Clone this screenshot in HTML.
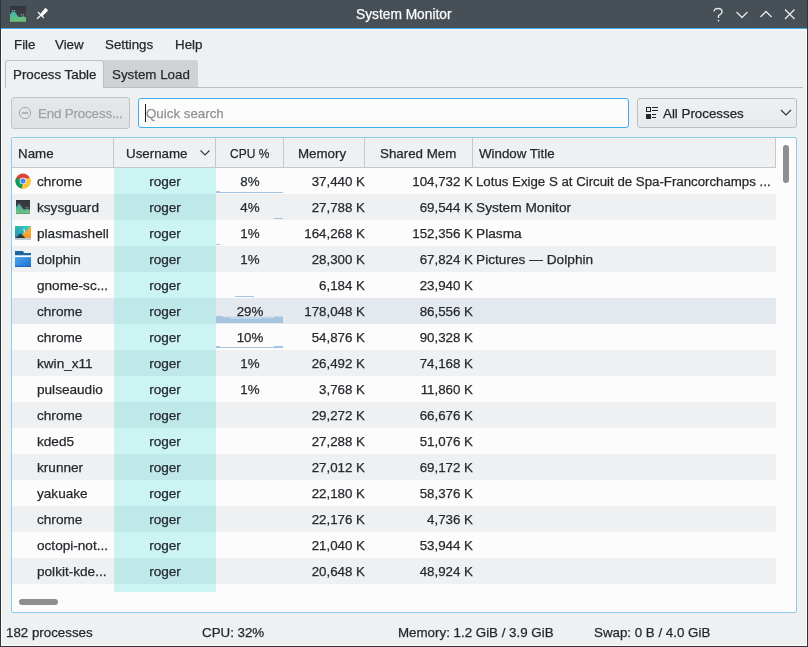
<!DOCTYPE html><html><head><meta charset="utf-8"><style>
*{margin:0;padding:0;box-sizing:border-box}
html,body{width:808px;height:647px;overflow:hidden}
body{-webkit-font-smoothing:antialiased;background:#eff0f1;font-family:"Liberation Sans",sans-serif;font-size:13.33px;color:#25292d;position:relative}
.a{position:absolute;white-space:nowrap}
.ic{position:absolute}
.t{position:absolute;white-space:nowrap;line-height:26px;height:26px;padding-top:1px}
.r{text-align:right}
.c{text-align:center}
#root{-webkit-text-stroke:0.25px currentColor;position:absolute;left:0;top:0;width:808px;height:647px;will-change:transform}
</style></head><body><div id="root">
<div class="a" style="left:0;top:0;width:808px;height:28px;background:#475057"></div>
<div class="a" style="left:0;top:28px;width:808px;height:1px;background:#3daee9"></div>
<div class="a" style="left:0;top:0;width:1px;height:647px;background:#2f343a"></div>
<div class="a" style="left:807px;top:0;width:1px;height:647px;background:#2f343a"></div>
<div class="a" style="left:0;top:646px;width:808px;height:1px;background:#2f343a"></div>
<div class="a" style="left:1px;top:29px;width:1px;height:617px;background:#fcfcfc"></div>
<div class="a" style="left:806px;top:29px;width:1px;height:617px;background:#fcfcfc"></div>
<div class="a" style="left:1px;top:645px;width:806px;height:1px;background:#fcfcfc"></div>
<div class="a" style="left:1px;top:29px;width:806px;height:1px;background:#fcf8f8"></div>
<!-- titlebar icons -->
<svg class="ic" style="left:10px;top:6px" width="16" height="16" viewBox="0 0 16 16">
<defs><linearGradient id="gk" x1="0" y1="0" x2="0" y2="1"><stop offset="0" stop-color="#3fb3ad"/><stop offset="1" stop-color="#74c174"/></linearGradient>
<linearGradient id="gb" x1="0" y1="0" x2="0" y2="1"><stop offset="0" stop-color="#31363b"/><stop offset="1" stop-color="#454a50"/></linearGradient></defs>
<rect width="16" height="16" fill="url(#gb)"/>
<path d="M0 16 V8.5 Q1 6.5 2.5 5.6 Q4 5 5.5 6.2 Q7.5 10.5 9 11 Q10.5 11.2 12 10.4 Q14 10.2 16 11.5 V16 Z" fill="url(#gk)"/>
<g fill="#cfd8d6" opacity="0.8"><circle cx="2.6" cy="4.5" r="0.6"/><circle cx="4.6" cy="4.5" r="0.6"/><circle cx="11.5" cy="8.8" r="0.6"/><circle cx="13.5" cy="8.8" r="0.6"/></g>
<rect y="15.3" width="16" height="0.7" fill="#5a9a60"/></svg>
<svg class="ic" style="left:36px;top:7px" width="14" height="14" viewBox="0 0 14 14">
<g stroke="#fcfcfc" stroke-width="1.3" stroke-linecap="round"><path d="M1.4 11.5 L4.8 8.2"/><path d="M2.4 5.5 L7.5 10.6"/></g>
<path d="M3.9 7.4 L9 1.3 Q9.6 0.9 10.2 1.4 L11.6 2.8 Q12.1 3.4 11.7 4 L6.1 9.6 Z" fill="#fcfcfc"/></svg>
<div class="a" style="left:356px;top:6px;font-size:13.75px;line-height:18px;color:#fcfcfc">System Monitor</div>
<svg class="ic" style="left:710px;top:6px" width="90" height="18" viewBox="0 0 90 18">
<g fill="none" stroke="#e8e9ea" stroke-width="1.3">
<path d="M4 5.5 Q4 2.5 8 2.5 Q12 2.5 12 5.5 Q12 8 8.5 9.5 V12"/>
<path d="M26.5 6 L32 11.5 L37.5 6"/>
<path d="M50.5 11 L56 5.5 L61.5 11"/>
<path d="M75 3.5 L84.5 13 M84.5 3.5 L75 13"/>
</g><circle cx="8.5" cy="14.6" r="0.9" fill="#e8e9ea"/></svg>
<!-- menu -->
<div class="a" style="left:14px;top:36px;line-height:18px">File</div>
<div class="a" style="left:55px;top:36px;line-height:18px">View</div>
<div class="a" style="left:105px;top:36px;line-height:18px">Settings</div>
<div class="a" style="left:175px;top:36px;line-height:18px">Help</div>
<!-- tabs -->
<div class="a" style="left:103px;top:87px;width:700px;height:1px;background:#bcbebf"></div>
<div class="a" style="left:103px;top:60px;width:95px;height:27px;background:#d1d2d4;border-radius:3px 3px 0 0"></div>
<div class="a" style="left:5px;top:60px;width:99px;height:28px;background:#eff0f1;border-radius:3px 3px 0 0;border:1px solid #bcbebf;border-bottom:none"></div>
<div class="a" style="left:13px;top:66px;line-height:18px">Process Table</div>
<div class="a" style="left:112px;top:66px;line-height:18px">System Load</div>
<!-- end process button -->
<div class="a" style="left:11px;top:97px;width:119px;height:32px;border:1px solid #c2c4c6;border-radius:3px;background:linear-gradient(#e6e7e9,#e0e1e3)"></div>
<svg class="ic" style="left:18px;top:106px" width="14" height="14" viewBox="0 0 14 14">
<circle cx="7" cy="7" r="5.6" fill="none" stroke="#a6a8aa" stroke-width="1"/>
<rect x="3.8" y="6.2" width="6.4" height="1.6" fill="#a6a8aa"/></svg>
<div class="a" style="left:38px;top:105px;line-height:18px;letter-spacing:-0.15px;color:#a0a2a4">End Process...</div>
<!-- search -->
<div class="a" style="left:138px;top:98px;width:491px;height:30px;border:1px solid #3daee9;border-radius:3px;background:#fcfcfc"></div>
<div class="a" style="left:145px;top:104px;width:1px;height:18px;background:#1b1e20"></div>
<div class="a" style="left:146px;top:105px;line-height:18px;color:#8f9193">Quick search</div>
<!-- combo -->
<div class="a" style="left:637px;top:98px;width:160px;height:30px;border:1px solid #bcbebf;border-radius:3px;background:linear-gradient(#eff0f1,#e8e9ea)"></div>
<svg class="ic" style="left:645px;top:106px" width="16" height="14" viewBox="0 0 16 14">
<rect x="1.5" y="1.5" width="4" height="4" fill="none" stroke="#232629" stroke-width="1"/>
<rect x="1" y="8" width="5" height="5" fill="#232629"/>
<path d="M7 1.5 H13 M7 4.5 H13 M7 8.5 H11 M7 11.5 H11" stroke="#232629" stroke-width="1"/></svg>
<div class="a" style="left:663px;top:105px;line-height:18px;color:#232629">All Processes</div>
<svg class="ic" style="left:780px;top:108px" width="12" height="8" viewBox="0 0 12 8">
<path d="M1 2 L6 7 L11 2" fill="none" stroke="#31363b" stroke-width="1.2"/></svg>
<!-- table frame -->
<div class="a" style="left:11px;top:137px;width:786px;height:476px;border:1px solid #8fcbee;border-radius:2px;background:#fcfcfc"></div>
<div class="a" style="left:12px;top:138px;width:764px;height:30px;background:#eff0f1;border-bottom:1px solid #c6c7c8;border-right:1px solid #c6c7c8"></div>

<div class="a" style="left:113px;top:138px;width:1px;height:29px;background:#c6c7c8"></div>
<div class="a" style="left:215px;top:138px;width:1px;height:29px;background:#c6c7c8"></div>
<div class="a" style="left:283px;top:138px;width:1px;height:29px;background:#c6c7c8"></div>
<div class="a" style="left:364px;top:138px;width:1px;height:29px;background:#c6c7c8"></div>
<div class="a" style="left:472px;top:138px;width:1px;height:29px;background:#c6c7c8"></div>
<div class="a" style="left:18px;top:145px;line-height:18px">Name</div>
<div class="a" style="left:126px;top:145px;line-height:18px">Username</div>
<svg class="ic" style="left:199px;top:149px" width="12" height="8" viewBox="0 0 12 8"><path d="M1.5 1.5 L6 6 L10.5 1.5" fill="none" stroke="#31363b" stroke-width="1.1"/></svg>
<div class="a" style="left:230px;top:145px;line-height:18px;transform:scaleX(0.9);transform-origin:0 0">CPU %</div>
<div class="a" style="left:298px;top:145px;line-height:18px">Memory</div>
<div class="a" style="left:380px;top:145px;line-height:18px">Shared Mem</div>
<div class="a" style="left:479px;top:145px;line-height:18px">Window Title</div>
<div class="a" style="left:12px;top:168px;width:764px;height:26px;background:#fcfcfc"></div>
<div class="a" style="left:114px;top:168px;width:102px;height:26px;background:#cbf4f3"></div>
<div class="a" style="left:12px;top:194px;width:764px;height:26px;background:#eff0f1"></div>
<div class="a" style="left:114px;top:194px;width:102px;height:26px;background:#bfe8e9"></div>
<div class="a" style="left:12px;top:220px;width:764px;height:26px;background:#fcfcfc"></div>
<div class="a" style="left:114px;top:220px;width:102px;height:26px;background:#cbf4f3"></div>
<div class="a" style="left:12px;top:246px;width:764px;height:26px;background:#eff0f1"></div>
<div class="a" style="left:114px;top:246px;width:102px;height:26px;background:#bfe8e9"></div>
<div class="a" style="left:12px;top:272px;width:764px;height:26px;background:#fcfcfc"></div>
<div class="a" style="left:114px;top:272px;width:102px;height:26px;background:#cbf4f3"></div>
<div class="a" style="left:12px;top:298px;width:764px;height:26px;background:#e4e9f0"></div>
<div class="a" style="left:114px;top:298px;width:102px;height:26px;background:#bfe8e9"></div>
<div class="a" style="left:12px;top:324px;width:764px;height:26px;background:#fcfcfc"></div>
<div class="a" style="left:114px;top:324px;width:102px;height:26px;background:#cbf4f3"></div>
<div class="a" style="left:12px;top:350px;width:764px;height:26px;background:#eff0f1"></div>
<div class="a" style="left:114px;top:350px;width:102px;height:26px;background:#bfe8e9"></div>
<div class="a" style="left:12px;top:376px;width:764px;height:26px;background:#fcfcfc"></div>
<div class="a" style="left:114px;top:376px;width:102px;height:26px;background:#cbf4f3"></div>
<div class="a" style="left:12px;top:402px;width:764px;height:26px;background:#eff0f1"></div>
<div class="a" style="left:114px;top:402px;width:102px;height:26px;background:#bfe8e9"></div>
<div class="a" style="left:12px;top:428px;width:764px;height:26px;background:#fcfcfc"></div>
<div class="a" style="left:114px;top:428px;width:102px;height:26px;background:#cbf4f3"></div>
<div class="a" style="left:12px;top:454px;width:764px;height:26px;background:#eff0f1"></div>
<div class="a" style="left:114px;top:454px;width:102px;height:26px;background:#bfe8e9"></div>
<div class="a" style="left:12px;top:480px;width:764px;height:26px;background:#fcfcfc"></div>
<div class="a" style="left:114px;top:480px;width:102px;height:26px;background:#cbf4f3"></div>
<div class="a" style="left:12px;top:506px;width:764px;height:26px;background:#eff0f1"></div>
<div class="a" style="left:114px;top:506px;width:102px;height:26px;background:#bfe8e9"></div>
<div class="a" style="left:12px;top:532px;width:764px;height:26px;background:#fcfcfc"></div>
<div class="a" style="left:114px;top:532px;width:102px;height:26px;background:#cbf4f3"></div>
<div class="a" style="left:12px;top:558px;width:764px;height:26px;background:#eff0f1"></div>
<div class="a" style="left:114px;top:558px;width:102px;height:26px;background:#bfe8e9"></div>
<div class="a" style="left:114px;top:584px;width:102px;height:8px;background:#cbf4f3"></div>
<svg class="ic" style="left:216px;top:168px" width="68" height="200" viewBox="0 0 68 200">
<g fill="#a5c4df">
<rect x="0" y="24" width="67" height="1"/><rect x="0" y="23" width="4" height="1"/>
<rect x="58" y="50" width="9" height="1"/>
<rect x="0" y="76" width="4" height="1"/>
<rect x="19" y="128" width="19" height="1"/>
<path d="M6 148.6 H60 V152 H6 Z" fill="#c6d9ea"/><path d="M0 148 H7 V149.5 H14 V151 H46 V150.3 H58 V148.5 H67 V155 H0 Z"/>
<rect x="0" y="179" width="67" height="1"/><rect x="0" y="178" width="4" height="1"/><rect x="58" y="178" width="9" height="1"/>
</g></svg>
<svg class="ic" style="left:15px;top:173px" width="16" height="16" viewBox="0 0 16 16">
<circle cx="8" cy="8" r="7.5" fill="#db4437"/>
<path d="M8 8 L1.2 4.6 A7.5 7.5 0 0 0 7 15.45 Z" fill="#0f9d58"/>
<path d="M8 8 L7 15.45 A7.5 7.5 0 0 0 15.3 5.2 L8 5.2 Z" fill="#fcc934"/>
<circle cx="8" cy="8" r="3.3" fill="#fff"/><circle cx="8" cy="8" r="2.6" fill="#4285f4"/></svg>
<div class="t" style="left:37px;top:168px;font-size:13.6px">chrome</div>
<div class="t c" style="left:114px;top:168px;width:102px;font-size:13.6px">roger</div>
<div class="t c" style="left:216px;top:168px;width:68px">8%</div>
<div class="t r" style="left:284px;width:81px;top:168px">37,440 K</div>
<div class="t r" style="left:365px;width:108px;top:168px">104,732 K</div>
<div class="t" style="left:476px;top:168px;font-size:13.25px">Lotus Exige S at Circuit de Spa-Francorchamps ...</div>
<svg class="ic" style="left:16px;top:200px" width="14" height="14" viewBox="0 0 16 16">
<rect width="16" height="16" fill="url(#gb)"/>
<path d="M0 16 V8.5 Q1 6.5 2.5 5.6 Q4 5 5.5 6.2 Q7.5 10.5 9 11 Q10.5 11.2 12 10.4 Q14 10.2 16 11.5 V16 Z" fill="url(#gk)"/>
<g fill="#cfd8d6" opacity="0.7"><circle cx="2.6" cy="4.5" r="0.6"/><circle cx="4.6" cy="4.5" r="0.6"/><circle cx="11.5" cy="8.8" r="0.6"/><circle cx="13.5" cy="8.8" r="0.6"/></g>
<rect y="15.2" width="16" height="0.8" fill="#5a9a60"/></svg>
<div class="t" style="left:37px;top:194px;font-size:13.6px">ksysguard</div>
<div class="t c" style="left:114px;top:194px;width:102px;font-size:13.6px">roger</div>
<div class="t c" style="left:216px;top:194px;width:68px">4%</div>
<div class="t r" style="left:284px;width:81px;top:194px">27,788 K</div>
<div class="t r" style="left:365px;width:108px;top:194px">69,544 K</div>
<div class="t" style="left:476px;top:194px;font-size:13.7px">System Monitor</div>
<svg class="ic" style="left:15px;top:226px" width="16" height="14" viewBox="0 0 16 14">
<defs><linearGradient id="gp" x1="0" y1="1" x2="1" y2="0"><stop offset="0" stop-color="#1d8fb0"/><stop offset="1" stop-color="#3fd6c0"/></linearGradient>
<linearGradient id="go" x1="0" y1="0" x2="0" y2="1"><stop offset="0" stop-color="#fdb23c"/><stop offset="1" stop-color="#f79a1e"/></linearGradient></defs>
<rect width="16" height="12" fill="url(#gp)"/>
<path d="M16 0 V12 H9 L7 9.5 Z" fill="url(#go)"/>
<path d="M0.5 12 L5.5 7.5 L10.5 12 Z" fill="#2c3a44"/>
<path d="M8 3 Q10 2.6 10.3 4.5 Q10.2 6.8 8.2 8 Q9.3 6 8.8 4.8 Z" fill="#e9f2f2" opacity="0.85"/>
<rect y="12" width="16" height="2" fill="#bfc9cf"/></svg>
<div class="t" style="left:37px;top:220px;font-size:13.6px">plasmashell</div>
<div class="t c" style="left:114px;top:220px;width:102px;font-size:13.6px">roger</div>
<div class="t c" style="left:216px;top:220px;width:68px">1%</div>
<div class="t r" style="left:284px;width:81px;top:220px">164,268 K</div>
<div class="t r" style="left:365px;width:108px;top:220px">152,356 K</div>
<div class="t" style="left:476px;top:220px;font-size:13.7px">Plasma</div>
<svg class="ic" style="left:15px;top:251px" width="16" height="16" viewBox="0 0 16 16">
<defs><linearGradient id="gf" x1="0" y1="0" x2="1" y2="1"><stop offset="0" stop-color="#49a6ee"/><stop offset="1" stop-color="#1c6fcf"/></linearGradient></defs>
<path d="M0 0 H8 L9 2 H16 V4.5 H0 Z" fill="#1a66a6"/>
<rect y="4.5" width="16" height="1.6" fill="#fcfcfc"/>
<rect y="6.1" width="16" height="9.9" fill="url(#gf)"/>
<rect y="15.2" width="16" height="0.8" fill="#1a5ea8"/></svg>
<div class="t" style="left:37px;top:246px;font-size:13.6px">dolphin</div>
<div class="t c" style="left:114px;top:246px;width:102px;font-size:13.6px">roger</div>
<div class="t c" style="left:216px;top:246px;width:68px">1%</div>
<div class="t r" style="left:284px;width:81px;top:246px">28,300 K</div>
<div class="t r" style="left:365px;width:108px;top:246px">67,824 K</div>
<div class="t" style="left:476px;top:246px;font-size:13.7px">Pictures — Dolphin</div>
<div class="t" style="left:37px;top:272px;font-size:13.6px">gnome-sc...</div>
<div class="t c" style="left:114px;top:272px;width:102px;font-size:13.6px">roger</div>
<div class="t r" style="left:284px;width:81px;top:272px">6,184 K</div>
<div class="t r" style="left:365px;width:108px;top:272px">23,940 K</div>
<div class="t" style="left:37px;top:298px;font-size:13.6px">chrome</div>
<div class="t c" style="left:114px;top:298px;width:102px;font-size:13.6px">roger</div>
<div class="t c" style="left:216px;top:298px;width:68px">29%</div>
<div class="t r" style="left:284px;width:81px;top:298px">178,048 K</div>
<div class="t r" style="left:365px;width:108px;top:298px">86,556 K</div>
<div class="t" style="left:37px;top:324px;font-size:13.6px">chrome</div>
<div class="t c" style="left:114px;top:324px;width:102px;font-size:13.6px">roger</div>
<div class="t c" style="left:216px;top:324px;width:68px">10%</div>
<div class="t r" style="left:284px;width:81px;top:324px">54,876 K</div>
<div class="t r" style="left:365px;width:108px;top:324px">90,328 K</div>
<div class="t" style="left:37px;top:350px;font-size:13.6px">kwin_x11</div>
<div class="t c" style="left:114px;top:350px;width:102px;font-size:13.6px">roger</div>
<div class="t c" style="left:216px;top:350px;width:68px">1%</div>
<div class="t r" style="left:284px;width:81px;top:350px">26,492 K</div>
<div class="t r" style="left:365px;width:108px;top:350px">74,168 K</div>
<div class="t" style="left:37px;top:376px;font-size:13.6px">pulseaudio</div>
<div class="t c" style="left:114px;top:376px;width:102px;font-size:13.6px">roger</div>
<div class="t c" style="left:216px;top:376px;width:68px">1%</div>
<div class="t r" style="left:284px;width:81px;top:376px">3,768 K</div>
<div class="t r" style="left:365px;width:108px;top:376px">11,860 K</div>
<div class="t" style="left:37px;top:402px;font-size:13.6px">chrome</div>
<div class="t c" style="left:114px;top:402px;width:102px;font-size:13.6px">roger</div>
<div class="t r" style="left:284px;width:81px;top:402px">29,272 K</div>
<div class="t r" style="left:365px;width:108px;top:402px">66,676 K</div>
<div class="t" style="left:37px;top:428px;font-size:13.6px">kded5</div>
<div class="t c" style="left:114px;top:428px;width:102px;font-size:13.6px">roger</div>
<div class="t r" style="left:284px;width:81px;top:428px">27,288 K</div>
<div class="t r" style="left:365px;width:108px;top:428px">51,076 K</div>
<div class="t" style="left:37px;top:454px;font-size:13.6px">krunner</div>
<div class="t c" style="left:114px;top:454px;width:102px;font-size:13.6px">roger</div>
<div class="t r" style="left:284px;width:81px;top:454px">27,012 K</div>
<div class="t r" style="left:365px;width:108px;top:454px">69,172 K</div>
<div class="t" style="left:37px;top:480px;font-size:13.6px">yakuake</div>
<div class="t c" style="left:114px;top:480px;width:102px;font-size:13.6px">roger</div>
<div class="t r" style="left:284px;width:81px;top:480px">22,180 K</div>
<div class="t r" style="left:365px;width:108px;top:480px">58,376 K</div>
<div class="t" style="left:37px;top:506px;font-size:13.6px">chrome</div>
<div class="t c" style="left:114px;top:506px;width:102px;font-size:13.6px">roger</div>
<div class="t r" style="left:284px;width:81px;top:506px">22,176 K</div>
<div class="t r" style="left:365px;width:108px;top:506px">4,736 K</div>
<div class="t" style="left:37px;top:532px;font-size:13.6px">octopi-not...</div>
<div class="t c" style="left:114px;top:532px;width:102px;font-size:13.6px">roger</div>
<div class="t r" style="left:284px;width:81px;top:532px">21,040 K</div>
<div class="t r" style="left:365px;width:108px;top:532px">53,944 K</div>
<div class="t" style="left:37px;top:558px;font-size:13.6px">polkit-kde...</div>
<div class="t c" style="left:114px;top:558px;width:102px;font-size:13.6px">roger</div>
<div class="t r" style="left:284px;width:81px;top:558px">20,648 K</div>
<div class="t r" style="left:365px;width:108px;top:558px">48,924 K</div>
<!-- scrollbars -->
<div class="a" style="left:783px;top:145px;width:6px;height:38px;border-radius:3px;background:#8c8e90"></div>
<div class="a" style="left:19px;top:599px;width:39px;height:6px;border-radius:3px;background:#8c8e90"></div>
<!-- status -->
<div class="a" style="left:6px;top:624px;line-height:18px">182 processes</div>
<div class="a" style="left:202px;top:624px;line-height:18px">CPU: 32%</div>
<div class="a" style="left:398px;top:624px;line-height:18px">Memory: 1.2 GiB / 3.9 GiB</div>
<div class="a" style="left:594px;top:624px;line-height:18px">Swap: 0 B / 4.0 GiB</div>
</div></body></html>
